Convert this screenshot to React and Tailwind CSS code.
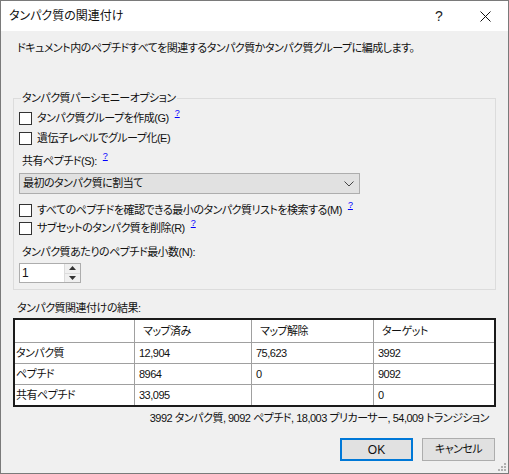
import { useMemo } from 'react';

const rows = [
  { label: 'タンパク質', mapped: '12,904', unmapped: '75,623', target: '3992' },
  { label: 'ペプチド', mapped: '8964', unmapped: '0', target: '9092' },
  { label: '共有ペプチド', mapped: '33,095', unmapped: '', target: '0' },
];

function Help() {
  return (
    <span className="ml-[6px] align-[6px] text-[9px] leading-none tracking-normal text-[#0000ff] underline">?</span>
  );
}

function Checkbox({ label, help, className }) {
  return (
    <div className={`flex items-center ${className}`}>
      <span className="h-[13px] w-[13px] shrink-0 border border-[#333333] bg-white" />
      <span className="ml-[5px] whitespace-nowrap">
        {label}
        {help && <Help />}
      </span>
    </div>
  );
}

function Cell({ children, header, first, lastCol, lastRow }) {
  const pad = first ? 'pl-[1px]' : header ? 'pl-[8px]' : 'pl-[4px]';
  return (
    <div
      className={`flex items-center bg-white whitespace-nowrap ${pad} ${lastCol ? '' : 'border-r border-[#a0a0a0]'} ${
        lastRow ? '' : 'border-b border-[#a0a0a0]'
      }`}
    >
      {children}
    </div>
  );
}

function ResultsTable() {
  const cells = useMemo(() => {
    const all = [['', 'マップ済み', 'マップ解除', 'ターゲット']];
    rows.forEach((r) => all.push([r.label, r.mapped, r.unmapped, r.target]));
    return all;
  }, []);

  return (
    <div className="grid h-[89px] grid-cols-[120px_117px_122px_1fr] grid-rows-[23px_21px_21px_1fr] border-2 border-[#1a1a1a]">
      {cells.map((row, ri) =>
        row.map((value, ci) => (
          <Cell
            key={`${ri}-${ci}`}
            header={ri === 0}
            first={ci === 0}
            lastCol={ci === 3}
            lastRow={ri === cells.length - 1}
          >
            {value}
          </Cell>
        ))
      )}
    </div>
  );
}

export default function App() {
  return (
    <div className="relative flex h-[474px] w-[509px] flex-col border border-[#7a7a7a] bg-[#f0f0f0] font-['Liberation_Sans','Noto_Sans_CJK_JP',sans-serif] text-[11px] tracking-[-0.5px] text-[#111111] [font-feature-settings:'palt']">
      {/* title bar */}
      <div className="flex h-[30px] shrink-0 items-center bg-white">
        <span className="ml-[8px] text-[12px] tracking-normal">タンパク質の関連付け</span>
        <div className="ml-auto flex h-full">
          <div className="flex w-[46px] items-center justify-center">
            <span className="text-[14px] tracking-normal text-[#222222]">?</span>
          </div>
          <div className="flex w-[46px] items-center justify-center">
            <svg width="11" height="11" viewBox="0 0 11 11">
              <path d="M0.5 0.5 L10.5 10.5 M10.5 0.5 L0.5 10.5" stroke="#111" strokeWidth="1" fill="none" />
            </svg>
          </div>
        </div>
      </div>

      <div className="flex flex-1 flex-col px-[12px]">
        <div className="flex h-[34px] items-center pl-[4px]">
          ドキュメント内のペプチドすべてを関連するタンパク質かタンパク質グループに編成します。
        </div>

        <fieldset className="mt-[25px] border border-[#dcdcdc] pb-[6px] pl-[5px] pr-[5px]">
          <legend className="ml-[2px] px-[1px] leading-[16px]">タンパク質パーシモニーオプション</legend>
          <Checkbox className="mt-[2px] h-[20px]" label="タンパク質グループを作成(G)" help />
          <Checkbox className="h-[21px]" label="遺伝子レベルでグループ化(E)" />
          <div className="mt-[2px] flex h-[20px] items-center pl-[3px]">
            <span>
              共有ペプチド(S):
              <Help />
            </span>
          </div>
          <div className="mt-[2px] flex h-[21px] w-[341px] items-center justify-between border border-[#adadad] bg-[#e1e1e1] pl-[3px] pr-[5px]">
            <span>最初のタンパク質に割当て</span>
            <svg width="10" height="6" viewBox="0 0 10 6">
              <path d="M0.5 0.5 L5 5 L9.5 0.5" stroke="#444" strokeWidth="1" fill="none" />
            </svg>
          </div>
          <Checkbox className="mt-[7px] h-[18px]" label="すべてのペプチドを確認できる最小のタンパク質リストを検索する(M)" help />
          <Checkbox className="h-[18px]" label="サブセットのタンパク質を削除(R)" help />
          <div className="mt-[5px] flex h-[20px] items-center pl-[3px]">タンパク質あたりのペプチド最小数(N):</div>
          <div className="mt-[1px] flex h-[20px] w-[62px] border border-[#adadad] bg-white">
            <span className="flex flex-1 items-center pl-[2px] text-[12px]">1</span>
            <div className="flex w-[16px] flex-col border-l border-[#dcdcdc]">
              <div className="flex flex-1 items-center justify-center border-b border-[#dcdcdc] bg-[#f0f0f0]">
                <svg width="7" height="4" viewBox="0 0 7 4">
                  <path d="M3.5 0 L7 4 L0 4 Z" fill="#333" />
                </svg>
              </div>
              <div className="flex flex-1 items-center justify-center bg-[#f0f0f0]">
                <svg width="7" height="4" viewBox="0 0 7 4">
                  <path d="M0 0 L7 0 L3.5 4 Z" fill="#333" />
                </svg>
              </div>
            </div>
          </div>
        </fieldset>

        <div className="mt-[8px] flex h-[20px] items-center pl-[4px]">タンパク質関連付けの結果:</div>
        <ResultsTable />

        <div className="mt-[1px] flex h-[20px] items-center justify-end pr-[7px]">
          3992 タンパク質, 9092 ペプチド, 18,003 プリカーサー, 54,009 トランジション
        </div>

        <div className="mt-[10px] flex justify-end gap-[9px] pr-[1px]">
          <button className="flex h-[23px] w-[73px] items-center justify-center border-2 border-[#0078d7] bg-[#e1e1e1] text-[12px] tracking-normal">
            OK
          </button>
          <button className="flex h-[23px] w-[73px] items-center justify-center border border-[#adadad] bg-[#e1e1e1]">
            キャンセル
          </button>
        </div>
      </div>

      <svg className="absolute bottom-[1px] right-[1px]" width="10" height="10" viewBox="0 0 10 10">
        <rect x="7" y="1" width="2" height="2" fill="#b0b0b0" />
        <rect x="4" y="4" width="2" height="2" fill="#b0b0b0" />
        <rect x="7" y="4" width="2" height="2" fill="#b0b0b0" />
        <rect x="1" y="7" width="2" height="2" fill="#b0b0b0" />
        <rect x="4" y="7" width="2" height="2" fill="#b0b0b0" />
        <rect x="7" y="7" width="2" height="2" fill="#b0b0b0" />
      </svg>
    </div>
  );
}
